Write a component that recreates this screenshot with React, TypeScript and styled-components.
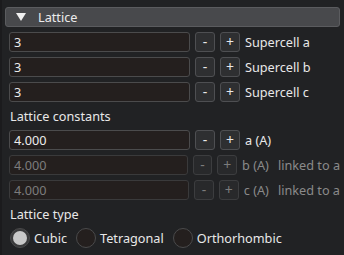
import styled, { createGlobalStyle } from 'styled-components';

const GlobalStyle = createGlobalStyle`
	html, body {
		margin: 0;
		padding: 0;
		background: #212224;
	}
	* {
		box-sizing: border-box;
	}
`;

type RowData = { value: string; label: string; note?: string; disabled?: boolean };

const supercell: RowData[] = [
	{ value: '3', label: 'Supercell a' },
	{ value: '3', label: 'Supercell b' },
	{ value: '3', label: 'Supercell c' },
];

const constants: RowData[] = [
	{ value: '4.000', label: 'a (A)' },
	{ value: '4.000', label: 'b (A)', note: 'linked to a', disabled: true },
	{ value: '4.000', label: 'c (A)', note: 'linked to a', disabled: true },
];

const types = [
	{ name: 'Cubic', selected: true },
	{ name: 'Tetragonal', selected: false },
	{ name: 'Orthorhombic', selected: false },
];

const InputRow = ({ value, label, note, disabled }: RowData) => (
	<Row>
		<Field disabled={disabled}>{value}</Field>
		<StepButton disabled={disabled}>-</StepButton>
		<StepButton disabled={disabled}>+</StepButton>
		<RowLabel disabled={disabled}>
			{label}
			{note && <Note>{note}</Note>}
		</RowLabel>
	</Row>
);

export default function App() {
	return (
		<>
			<GlobalStyle />
			<Window>
				<Header>
					<Arrow />
					<HeaderTitle>Lattice</HeaderTitle>
				</Header>
				<Body>
					{supercell.map((r) => (
						<InputRow key={r.label} {...r} />
					))}
					<SectionLabel>Lattice constants</SectionLabel>
					{constants.map((r) => (
						<InputRow key={r.label} {...r} />
					))}
					<SectionLabel>Lattice type</SectionLabel>
					<RadioGroup>
						{types.map((t) => (
							<Radio key={t.name}>
								<Circle selected={t.selected} />
								<RadioText>{t.name}</RadioText>
							</Radio>
						))}
					</RadioGroup>
				</Body>
			</Window>
		</>
	);
}

const Window = styled.div`
	width: 344px;
	height: 255px;
	background: #212224;
	border-left: 2px solid #1b1b1d;
	padding: 7px 4px 0 3px;
	font-family: 'Noto Sans', 'Open Sans', sans-serif;
	font-size: 12.7px;
	color: #e8e8e8;
	overflow: hidden;
`;

const Header = styled.div`
	display: flex;
	align-items: center;
	height: 20px;
	background: #48494c;
	border: 1px solid #5b5c5f;
	border-radius: 3px;
	padding-left: 10px;
`;

const Arrow = styled.div`
	width: 0;
	height: 0;
	border-left: 5px solid transparent;
	border-right: 5px solid transparent;
	border-top: 8px solid #f0f0f0;
	margin-right: 12px;
`;

const HeaderTitle = styled.span`
	color: #ececec;
`;

const Body = styled.div`
	display: flex;
	flex-direction: column;
	gap: 5px;
	padding: 5px 0 0 4px;
`;

const Row = styled.div`
	display: flex;
	align-items: center;
	gap: 5px;
	height: 20px;
`;

const Field = styled.div<{ disabled?: boolean }>`
	width: 181px;
	height: 20px;
	background: #241f1e;
	border: 1px solid ${(p) => (p.disabled ? '#3a3a3b' : '#4b4b4c')};
	border-radius: 3px;
	padding-left: 4px;
	display: flex;
	align-items: center;
	color: ${(p) => (p.disabled ? '#7c7c7c' : '#ececec')};
`;

const StepButton = styled.div<{ disabled?: boolean }>`
	width: 20px;
	height: 20px;
	background: ${(p) => (p.disabled ? '#28292b' : '#2e2f31')};
	border: 1px solid ${(p) => (p.disabled ? '#3c3d3f' : '#4e4f52')};
	border-radius: 3px;
	display: flex;
	align-items: center;
	justify-content: center;
	color: ${(p) => (p.disabled ? '#7c7c7c' : '#e8e8e8')};
	font-size: 14px;
	line-height: 1;
`;

const RowLabel = styled.span<{ disabled?: boolean }>`
	white-space: nowrap;
	color: ${(p) => (p.disabled ? '#8a8a8a' : '#e8e8e8')};
`;

const Note = styled.span`
	margin-left: 9px;
`;

const SectionLabel = styled.div`
	height: 18px;
	line-height: 18px;
	padding-left: 1px;
	color: #e8e8e8;
`;

const RadioGroup = styled.div`
	display: flex;
	align-items: center;
	gap: 9px;
	height: 20px;
	padding-left: 1px;
`;

const Radio = styled.div`
	display: flex;
	align-items: center;
	gap: 4px;
`;

const Circle = styled.div<{ selected?: boolean }>`
	width: 20px;
	height: 20px;
	border-radius: 50%;
	border: 1px solid #4a4a4b;
	background: ${(p) => (p.selected ? '#3a3a3b' : '#241f1e')};
	display: flex;
	align-items: center;
	justify-content: center;
	&::after {
		content: '';
		display: ${(p) => (p.selected ? 'block' : 'none')};
		width: 14px;
		height: 14px;
		border-radius: 50%;
		background: #c8c8c8;
	}
`;

const RadioText = styled.span`
	white-space: nowrap;
`;
